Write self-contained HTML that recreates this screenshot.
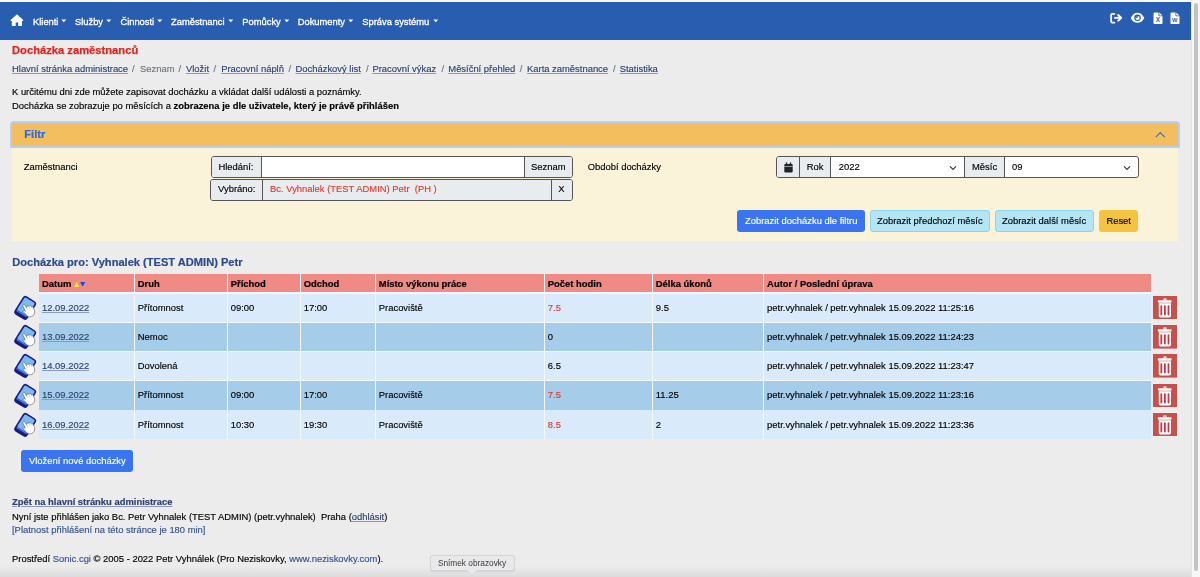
<!DOCTYPE html>
<html><head><meta charset="utf-8">
<style>
html,body{margin:0;padding:0}
body{width:1200px;height:577px;overflow:hidden;background:#ececec;position:relative;font-family:"Liberation Sans",sans-serif;color:#000}
.a{position:absolute}
.t{position:absolute;white-space:nowrap;font-size:9.41px;line-height:12px;-webkit-text-stroke:0.15px currentColor;filter:blur(0.25px)}
.b{font-weight:bold;-webkit-text-stroke:0.2px currentColor}
.lnk{color:#2f4273;text-decoration:underline;text-decoration-color:#8d99b8}
.nav{position:absolute;left:0;top:2px;width:1191px;height:37.5px;background:#285db0}
.nt{color:#fff;font-size:9.36px;-webkit-text-stroke:0.3px #fff}
.caret{position:absolute;width:0;height:0;border-left:2.8px solid transparent;border-right:2.8px solid transparent;border-top:3.2px solid #fff}
</style></head>
<body>
<div class="a" style="left:0;top:0;width:1191px;height:2px;background:#f8f9fd"></div>
<div class="nav"></div>
<!-- home -->
<svg class="a" style="left:10px;top:14px" width="14" height="13" viewBox="0 0 14 13"><path d="M7 0.2 L13.2 6 L13.2 6.9 L12 6.9 L12 11.9 L8.2 11.9 L8.2 8.4 L5.7 8.4 L5.7 11.9 L1.8 11.9 L1.8 6.9 L0.6 6.9 L0.6 6 Z" fill="#fff"/></svg>
<div class="t nt" style="left:33px;top:15.6px">Klienti</div><svg class="a" style="left:60.9px;top:19px" width="6" height="4" viewBox="0 0 6 4"><path d="M0.3 0.4 H5.3 L2.8 3.3 Z" fill="#fff"/></svg>
<div class="t nt" style="left:75px;top:15.6px">Služby</div><svg class="a" style="left:105.9px;top:19px" width="6" height="4" viewBox="0 0 6 4"><path d="M0.3 0.4 H5.3 L2.8 3.3 Z" fill="#fff"/></svg>
<div class="t nt" style="left:120.4px;top:15.6px">Činnosti</div><svg class="a" style="left:156.9px;top:19px" width="6" height="4" viewBox="0 0 6 4"><path d="M0.3 0.4 H5.3 L2.8 3.3 Z" fill="#fff"/></svg>
<div class="t nt" style="left:171px;top:15.6px">Zaměstnanci</div><svg class="a" style="left:227.7px;top:19px" width="6" height="4" viewBox="0 0 6 4"><path d="M0.3 0.4 H5.3 L2.8 3.3 Z" fill="#fff"/></svg>
<div class="t nt" style="left:242.3px;top:15.6px">Pomůcky</div><svg class="a" style="left:283.7px;top:19px" width="6" height="4" viewBox="0 0 6 4"><path d="M0.3 0.4 H5.3 L2.8 3.3 Z" fill="#fff"/></svg>
<div class="t nt" style="left:297.7px;top:15.6px">Dokumenty</div><svg class="a" style="left:347.7px;top:19px" width="6" height="4" viewBox="0 0 6 4"><path d="M0.3 0.4 H5.3 L2.8 3.3 Z" fill="#fff"/></svg>
<div class="t nt" style="left:362.3px;top:15.6px">Správa systému</div><svg class="a" style="left:432.7px;top:19px" width="6" height="4" viewBox="0 0 6 4"><path d="M0.3 0.4 H5.3 L2.8 3.3 Z" fill="#fff"/></svg>

<!-- title -->
<div class="t b" style="left:12px;top:43.4px;font-size:11.2px;line-height:14px;color:#e3241f;-webkit-text-stroke:0.25px #e3241f">Docházka zaměstnanců</div>
<!-- breadcrumb -->
<div class="t lnk" style="left:12px;top:62.8px">Hlavní stránka administrace</div>
<div class="t" style="left:132px;top:62.8px;color:#6c757d">/</div>
<div class="t" style="left:140px;top:62.8px;color:#6c757d">Seznam</div>
<div class="t" style="left:178.5px;top:62.8px;color:#6c757d">/</div>
<div class="t lnk" style="left:186px;top:62.8px">Vložit</div>
<div class="t" style="left:213.6px;top:62.8px;color:#6c757d">/</div>
<div class="t lnk" style="left:221.2px;top:62.8px">Pracovní náplň</div>
<div class="t" style="left:288.6px;top:62.8px;color:#6c757d">/</div>
<div class="t lnk" style="left:295.5px;top:62.8px">Docházkový list</div>
<div class="t" style="left:366px;top:62.8px;color:#6c757d">/</div>
<div class="t lnk" style="left:372.4px;top:62.8px">Pracovní výkaz</div>
<div class="t" style="left:441.5px;top:62.8px;color:#6c757d">/</div>
<div class="t lnk" style="left:448.3px;top:62.8px">Měsíční přehled</div>
<div class="t" style="left:519.7px;top:62.8px;color:#6c757d">/</div>
<div class="t lnk" style="left:527px;top:62.8px">Karta zaměstnance</div>
<div class="t" style="left:612.9px;top:62.8px;color:#6c757d">/</div>
<div class="t lnk" style="left:619.7px;top:62.8px">Statistika</div>

<div class="t" style="left:12px;top:86px">K určitému dni zde můžete zapisovat docházku a vkládat další události a poznámky.</div>
<div class="t" style="left:12px;top:100px">Docházka se zobrazuje po měsících a <b>zobrazena je dle uživatele, který je právě přihlášen</b></div>


<!-- FILTER -->
<div class="a" style="left:10.2px;top:121px;width:1169.5px;height:26.5px;background:#b9cdf2;border-radius:4px 4px 1px 1px"></div>
<div class="a" style="left:12px;top:123px;width:1166px;height:22.8px;background:#f3bf5e"></div>
<div class="a" style="left:12px;top:147.5px;width:1166px;height:93.8px;background:#fbf3d9"></div>
<div class="t b" style="left:24.3px;top:127.4px;font-size:11.1px;line-height:14px;color:#2f6ad9">Filtr</div>
<svg class="a" style="left:1155px;top:131px" width="11" height="7" viewBox="0 0 11 7"><path d="M0.8 6.2 L5.3 1.6 L9.8 6.2" fill="none" stroke="#4a6aa8" stroke-width="1.1"/></svg>
<div class="t" style="left:23.7px;top:160.8px">Zaměstnanci</div>

<!-- group 1 -->
<div class="a" style="left:211px;top:156px;width:362px;height:22px;box-sizing:border-box;border:1px solid #555;border-radius:3px;background:#fff;overflow:hidden">
  <div class="a" style="left:0;top:0;width:49px;height:20px;background:#e9ecef;border-right:1px solid #555"></div>
  <div class="a" style="left:312px;top:0;width:49px;height:20px;background:#e9ecef;border-left:1px solid #555"></div>
</div>
<div class="t" style="left:218.4px;top:160.8px">Hledání:</div>
<div class="t" style="left:531px;top:160.8px">Seznam</div>
<!-- group 2 -->
<div class="a" style="left:210px;top:179px;width:363px;height:22px;box-sizing:border-box;border:1px solid #555;border-radius:3px;background:#e9ecef;overflow:hidden">
  <div class="a" style="left:0;top:0;width:51px;height:20px;background:#e9ecef;border-right:1px solid #555"></div>
  <div class="a" style="left:340px;top:0;width:21px;height:20px;background:#e9ecef;border-left:1px solid #555"></div>
</div>
<div class="t" style="left:218.1px;top:182.9px">Vybráno:</div>
<div class="t" style="left:270px;top:182.9px;color:#e03a30">Bc. Vyhnalek (TEST ADMIN) Petr&nbsp; (PH )</div>
<div class="t" style="left:558.3px;top:182.9px">X</div>

<div class="t" style="left:587.7px;top:160.8px">Období docházky</div>
<!-- date group -->
<div class="a" style="left:776px;top:156px;width:363px;height:22px;box-sizing:border-box;border:1px solid #555;border-radius:3px;background:#fff;overflow:hidden">
  <div class="a" style="left:0;top:0;width:22px;height:20px;background:#e9ecef;border-right:1px solid #555"></div>
  <div class="a" style="left:23px;top:0;width:30px;height:20px;background:#e9ecef;border-right:1px solid #555"></div>
  <div class="a" style="left:187px;top:0;width:39px;height:20px;background:#e9ecef;border-left:1px solid #555;border-right:1px solid #555"></div>
</div>
<svg class="a" style="left:784px;top:161.5px" width="9" height="11" viewBox="0 0 9 11"><rect x="0.3" y="2" width="8.4" height="8.6" rx="1" fill="#212529"/><rect x="1.8" y="0.5" width="1.4" height="2.5" fill="#212529"/><rect x="5.8" y="0.5" width="1.4" height="2.5" fill="#212529"/><rect x="0.3" y="4.2" width="8.4" height="0.6" fill="#e9ecef"/></svg>
<div class="t" style="left:806.8px;top:161px">Rok</div>
<div class="t" style="left:838.8px;top:161px">2022</div>
<svg class="a" style="left:948.5px;top:164.5px" width="8" height="6" viewBox="0 0 8 6"><path d="M1 1.3 L4 4.3 L7 1.3" fill="none" stroke="#343a40" stroke-width="1.2"/></svg>
<div class="t" style="left:972px;top:161px">Měsíc</div>
<div class="t" style="left:1012px;top:161px">09</div>
<svg class="a" style="left:1122.5px;top:164.5px" width="8" height="6" viewBox="0 0 8 6"><path d="M1 1.3 L4 4.3 L7 1.3" fill="none" stroke="#343a40" stroke-width="1.2"/></svg>

<!-- buttons -->
<div class="a" style="left:737.3px;top:210px;width:127.5px;height:22px;background:#3a74ef;border-radius:3px"></div>
<div class="t" style="left:745px;top:215.2px;color:#fff">Zobrazit docházku dle filtru</div>
<div class="a" style="left:869.7px;top:210px;width:120px;height:22px;box-sizing:border-box;background:#b4e5f5;border:1px solid #8fd4ea;border-radius:3px"></div>
<div class="t" style="left:877px;top:215.2px">Zobrazit předchozí měsíc</div>
<div class="a" style="left:994.8px;top:210px;width:98.8px;height:22px;box-sizing:border-box;background:#b4e5f5;border:1px solid #8fd4ea;border-radius:3px"></div>
<div class="t" style="left:1002px;top:215.2px">Zobrazit další měsíc</div>
<div class="a" style="left:1098.6px;top:210px;width:39.7px;height:22px;background:#f5c342;border-radius:3px"></div>
<div class="t" style="left:1106.4px;top:215.2px">Reset</div>

<!-- TABLE -->
<div class="t b" style="left:12.2px;top:255.3px;font-size:11.1px;line-height:14px;color:#2e4a8c">Docházka pro: Vyhnalek (TEST ADMIN) Petr</div>
<div class="a" style="left:39.25px;top:273.7px;width:1111.75px;height:165.50px;background:#f4f7fb"></div>
<div class="a" style="left:39.25px;top:273.7px;width:94.75px;height:18.8px;background:#f08a84"></div>
<div class="t b" style="left:42.05px;top:278.20px">Datum</div>
<div class="a" style="left:135px;top:273.7px;width:92.00px;height:18.8px;background:#f08a84"></div>
<div class="t b" style="left:137.80px;top:278.20px">Druh</div>
<div class="a" style="left:228px;top:273.7px;width:72.00px;height:18.8px;background:#f08a84"></div>
<div class="t b" style="left:230.80px;top:278.20px">Příchod</div>
<div class="a" style="left:301px;top:273.7px;width:74.00px;height:18.8px;background:#f08a84"></div>
<div class="t b" style="left:303.80px;top:278.20px">Odchod</div>
<div class="a" style="left:376px;top:273.7px;width:168.00px;height:18.8px;background:#f08a84"></div>
<div class="t b" style="left:378.80px;top:278.20px">Místo výkonu práce</div>
<div class="a" style="left:545px;top:273.7px;width:107.00px;height:18.8px;background:#f08a84"></div>
<div class="t b" style="left:547.80px;top:278.20px">Počet hodin</div>
<div class="a" style="left:653px;top:273.7px;width:110.30px;height:18.8px;background:#f08a84"></div>
<div class="t b" style="left:655.80px;top:278.20px">Délka úkonů</div>
<div class="a" style="left:764.3px;top:273.7px;width:386.70px;height:18.8px;background:#f08a84"></div>
<div class="t b" style="left:767.10px;top:278.20px">Autor / Poslední úprava</div>
<svg class="a" style="left:73.6px;top:280.8px" width="12" height="7" viewBox="0 0 12 7"><path d="M0.2 6 L2.65 0.7 L5.1 6 Z" fill="#f7ee3a"/><path d="M6.1 1.0 L11.2 1.0 L8.65 5.8 Z" fill="#1d45ee"/></svg>
<div class="a" style="left:39.25px;top:293.60px;width:94.75px;height:28.4px;background:#d9ebfa"></div>
<div class="t lnk" style="left:42.05px;top:301.80px;">12.09.2022</div>
<div class="a" style="left:135px;top:293.60px;width:92.00px;height:28.4px;background:#d9ebfa"></div>
<div class="t" style="left:137.80px;top:301.80px;">Přítomnost</div>
<div class="a" style="left:228px;top:293.60px;width:72.00px;height:28.4px;background:#d9ebfa"></div>
<div class="t" style="left:230.80px;top:301.80px;">09:00</div>
<div class="a" style="left:301px;top:293.60px;width:74.00px;height:28.4px;background:#d9ebfa"></div>
<div class="t" style="left:303.80px;top:301.80px;">17:00</div>
<div class="a" style="left:376px;top:293.60px;width:168.00px;height:28.4px;background:#d9ebfa"></div>
<div class="t" style="left:378.80px;top:301.80px;">Pracoviště</div>
<div class="a" style="left:545px;top:293.60px;width:107.00px;height:28.4px;background:#d9ebfa"></div>
<div class="t" style="left:547.80px;top:301.80px;color:#e03a30;">7.5</div>
<div class="a" style="left:653px;top:293.60px;width:110.30px;height:28.4px;background:#d9ebfa"></div>
<div class="t" style="left:655.80px;top:301.80px;">9.5</div>
<div class="a" style="left:764.3px;top:293.60px;width:386.70px;height:28.4px;background:#d9ebfa"></div>
<div class="t" style="left:767.10px;top:301.80px;">petr.vyhnalek / petr.vyhnalek 15.09.2022 11:25:16</div>
<svg class="a" style="left:10px;top:292.00px" width="30" height="30" viewBox="0 0 30 30"><g transform="rotate(32 15.2 15.9)"><rect x="7.6" y="5.2" width="15.2" height="21.4" rx="3.2" fill="#1d1a7c"/><rect x="9.2" y="6.8" width="12" height="15.1" rx="1.4" fill="#7ab9ef"/><rect x="9.2" y="21.6" width="12" height="1.6" fill="#3b78de"/></g><path d="M13.3 12.6 C13.7 12.1 14.5 12.2 14.8 12.9 L16.5 15.6 C16.8 14.5 17.8 13.9 18.8 14.1 C19.5 13.6 20.8 13.7 21.4 14.3 C22.4 14.3 23.3 15.2 23.6 16.2 C24.4 17.2 24.9 19.2 24.6 21 C24.3 23 22.3 24.7 19.9 24.9 C18.3 25 17.2 24.3 16.3 23 L13.4 19.9 C13 19.4 13.2 18.7 13.9 18.7 C14.4 18.7 14.9 19 15.3 19.2 L12.9 13.9 C12.7 13.4 12.9 12.9 13.3 12.6 Z" fill="#fff" stroke="#4a4a4a" stroke-width="0.55"/><path d="M16.5 15.6 L17.6 17.6 M18.8 14.1 L19.8 16.6 M21.4 14.3 L22 16.6" stroke="#8a8a8a" stroke-width="0.45" fill="none"/></svg>
<div class="a" style="left:1152.5px;top:295.40px;width:24.8px;height:24.6px;background:#eef3f6"></div><svg class="a" style="left:1153px;top:295.90px" width="24" height="23.6" viewBox="0 0 24 23.6"><rect width="24" height="23.6" fill="#c8504c"/><rect x="10.3" y="2.2" width="3.4" height="2.4" rx="0.6" fill="#f0c8c6"/><rect x="4.7" y="4.3" width="14" height="2.4" rx="1.1" fill="#fff"/><path d="M5.8 7.2 H18 V19.8 C18 20.8 17.2 21.4 16.4 21.4 H7.4 C6.6 21.4 5.8 20.8 5.8 19.8 Z" fill="#fff"/><rect x="7.4" y="9.2" width="1.8" height="10.3" rx="0.9" fill="#c8364a"/><rect x="11" y="9.2" width="1.8" height="10.3" rx="0.9" fill="#c8364a"/><rect x="14.6" y="9.2" width="1.8" height="10.3" rx="0.9" fill="#c8364a"/></svg>
<div class="a" style="left:39.25px;top:322.80px;width:94.75px;height:28.4px;background:#a5cce8"></div>
<div class="t lnk" style="left:42.05px;top:331.00px;">13.09.2022</div>
<div class="a" style="left:135px;top:322.80px;width:92.00px;height:28.4px;background:#a5cce8"></div>
<div class="t" style="left:137.80px;top:331.00px;">Nemoc</div>
<div class="a" style="left:228px;top:322.80px;width:72.00px;height:28.4px;background:#a5cce8"></div>
<div class="a" style="left:301px;top:322.80px;width:74.00px;height:28.4px;background:#a5cce8"></div>
<div class="a" style="left:376px;top:322.80px;width:168.00px;height:28.4px;background:#a5cce8"></div>
<div class="a" style="left:545px;top:322.80px;width:107.00px;height:28.4px;background:#a5cce8"></div>
<div class="t" style="left:547.80px;top:331.00px;">0</div>
<div class="a" style="left:653px;top:322.80px;width:110.30px;height:28.4px;background:#a5cce8"></div>
<div class="a" style="left:764.3px;top:322.80px;width:386.70px;height:28.4px;background:#a5cce8"></div>
<div class="t" style="left:767.10px;top:331.00px;">petr.vyhnalek / petr.vyhnalek 15.09.2022 11:24:23</div>
<svg class="a" style="left:10px;top:321.20px" width="30" height="30" viewBox="0 0 30 30"><g transform="rotate(32 15.2 15.9)"><rect x="7.6" y="5.2" width="15.2" height="21.4" rx="3.2" fill="#1d1a7c"/><rect x="9.2" y="6.8" width="12" height="15.1" rx="1.4" fill="#7ab9ef"/><rect x="9.2" y="21.6" width="12" height="1.6" fill="#3b78de"/></g><path d="M13.3 12.6 C13.7 12.1 14.5 12.2 14.8 12.9 L16.5 15.6 C16.8 14.5 17.8 13.9 18.8 14.1 C19.5 13.6 20.8 13.7 21.4 14.3 C22.4 14.3 23.3 15.2 23.6 16.2 C24.4 17.2 24.9 19.2 24.6 21 C24.3 23 22.3 24.7 19.9 24.9 C18.3 25 17.2 24.3 16.3 23 L13.4 19.9 C13 19.4 13.2 18.7 13.9 18.7 C14.4 18.7 14.9 19 15.3 19.2 L12.9 13.9 C12.7 13.4 12.9 12.9 13.3 12.6 Z" fill="#fff" stroke="#4a4a4a" stroke-width="0.55"/><path d="M16.5 15.6 L17.6 17.6 M18.8 14.1 L19.8 16.6 M21.4 14.3 L22 16.6" stroke="#8a8a8a" stroke-width="0.45" fill="none"/></svg>
<div class="a" style="left:1152.5px;top:324.60px;width:24.8px;height:24.6px;background:#eef3f6"></div><svg class="a" style="left:1153px;top:325.10px" width="24" height="23.6" viewBox="0 0 24 23.6"><rect width="24" height="23.6" fill="#c8504c"/><rect x="10.3" y="2.2" width="3.4" height="2.4" rx="0.6" fill="#f0c8c6"/><rect x="4.7" y="4.3" width="14" height="2.4" rx="1.1" fill="#fff"/><path d="M5.8 7.2 H18 V19.8 C18 20.8 17.2 21.4 16.4 21.4 H7.4 C6.6 21.4 5.8 20.8 5.8 19.8 Z" fill="#fff"/><rect x="7.4" y="9.2" width="1.8" height="10.3" rx="0.9" fill="#c8364a"/><rect x="11" y="9.2" width="1.8" height="10.3" rx="0.9" fill="#c8364a"/><rect x="14.6" y="9.2" width="1.8" height="10.3" rx="0.9" fill="#c8364a"/></svg>
<div class="a" style="left:39.25px;top:352.00px;width:94.75px;height:28.4px;background:#d9ebfa"></div>
<div class="t lnk" style="left:42.05px;top:360.20px;">14.09.2022</div>
<div class="a" style="left:135px;top:352.00px;width:92.00px;height:28.4px;background:#d9ebfa"></div>
<div class="t" style="left:137.80px;top:360.20px;">Dovolená</div>
<div class="a" style="left:228px;top:352.00px;width:72.00px;height:28.4px;background:#d9ebfa"></div>
<div class="a" style="left:301px;top:352.00px;width:74.00px;height:28.4px;background:#d9ebfa"></div>
<div class="a" style="left:376px;top:352.00px;width:168.00px;height:28.4px;background:#d9ebfa"></div>
<div class="a" style="left:545px;top:352.00px;width:107.00px;height:28.4px;background:#d9ebfa"></div>
<div class="t" style="left:547.80px;top:360.20px;">6.5</div>
<div class="a" style="left:653px;top:352.00px;width:110.30px;height:28.4px;background:#d9ebfa"></div>
<div class="a" style="left:764.3px;top:352.00px;width:386.70px;height:28.4px;background:#d9ebfa"></div>
<div class="t" style="left:767.10px;top:360.20px;">petr.vyhnalek / petr.vyhnalek 15.09.2022 11:23:47</div>
<svg class="a" style="left:10px;top:350.40px" width="30" height="30" viewBox="0 0 30 30"><g transform="rotate(32 15.2 15.9)"><rect x="7.6" y="5.2" width="15.2" height="21.4" rx="3.2" fill="#1d1a7c"/><rect x="9.2" y="6.8" width="12" height="15.1" rx="1.4" fill="#7ab9ef"/><rect x="9.2" y="21.6" width="12" height="1.6" fill="#3b78de"/></g><path d="M13.3 12.6 C13.7 12.1 14.5 12.2 14.8 12.9 L16.5 15.6 C16.8 14.5 17.8 13.9 18.8 14.1 C19.5 13.6 20.8 13.7 21.4 14.3 C22.4 14.3 23.3 15.2 23.6 16.2 C24.4 17.2 24.9 19.2 24.6 21 C24.3 23 22.3 24.7 19.9 24.9 C18.3 25 17.2 24.3 16.3 23 L13.4 19.9 C13 19.4 13.2 18.7 13.9 18.7 C14.4 18.7 14.9 19 15.3 19.2 L12.9 13.9 C12.7 13.4 12.9 12.9 13.3 12.6 Z" fill="#fff" stroke="#4a4a4a" stroke-width="0.55"/><path d="M16.5 15.6 L17.6 17.6 M18.8 14.1 L19.8 16.6 M21.4 14.3 L22 16.6" stroke="#8a8a8a" stroke-width="0.45" fill="none"/></svg>
<div class="a" style="left:1152.5px;top:353.80px;width:24.8px;height:24.6px;background:#eef3f6"></div><svg class="a" style="left:1153px;top:354.30px" width="24" height="23.6" viewBox="0 0 24 23.6"><rect width="24" height="23.6" fill="#c8504c"/><rect x="10.3" y="2.2" width="3.4" height="2.4" rx="0.6" fill="#f0c8c6"/><rect x="4.7" y="4.3" width="14" height="2.4" rx="1.1" fill="#fff"/><path d="M5.8 7.2 H18 V19.8 C18 20.8 17.2 21.4 16.4 21.4 H7.4 C6.6 21.4 5.8 20.8 5.8 19.8 Z" fill="#fff"/><rect x="7.4" y="9.2" width="1.8" height="10.3" rx="0.9" fill="#c8364a"/><rect x="11" y="9.2" width="1.8" height="10.3" rx="0.9" fill="#c8364a"/><rect x="14.6" y="9.2" width="1.8" height="10.3" rx="0.9" fill="#c8364a"/></svg>
<div class="a" style="left:39.25px;top:381.20px;width:94.75px;height:28.4px;background:#a5cce8"></div>
<div class="t lnk" style="left:42.05px;top:389.40px;">15.09.2022</div>
<div class="a" style="left:135px;top:381.20px;width:92.00px;height:28.4px;background:#a5cce8"></div>
<div class="t" style="left:137.80px;top:389.40px;">Přítomnost</div>
<div class="a" style="left:228px;top:381.20px;width:72.00px;height:28.4px;background:#a5cce8"></div>
<div class="t" style="left:230.80px;top:389.40px;">09:00</div>
<div class="a" style="left:301px;top:381.20px;width:74.00px;height:28.4px;background:#a5cce8"></div>
<div class="t" style="left:303.80px;top:389.40px;">17:00</div>
<div class="a" style="left:376px;top:381.20px;width:168.00px;height:28.4px;background:#a5cce8"></div>
<div class="t" style="left:378.80px;top:389.40px;">Pracoviště</div>
<div class="a" style="left:545px;top:381.20px;width:107.00px;height:28.4px;background:#a5cce8"></div>
<div class="t" style="left:547.80px;top:389.40px;color:#e03a30;">7.5</div>
<div class="a" style="left:653px;top:381.20px;width:110.30px;height:28.4px;background:#a5cce8"></div>
<div class="t" style="left:655.80px;top:389.40px;">11.25</div>
<div class="a" style="left:764.3px;top:381.20px;width:386.70px;height:28.4px;background:#a5cce8"></div>
<div class="t" style="left:767.10px;top:389.40px;">petr.vyhnalek / petr.vyhnalek 15.09.2022 11:23:16</div>
<svg class="a" style="left:10px;top:379.60px" width="30" height="30" viewBox="0 0 30 30"><g transform="rotate(32 15.2 15.9)"><rect x="7.6" y="5.2" width="15.2" height="21.4" rx="3.2" fill="#1d1a7c"/><rect x="9.2" y="6.8" width="12" height="15.1" rx="1.4" fill="#7ab9ef"/><rect x="9.2" y="21.6" width="12" height="1.6" fill="#3b78de"/></g><path d="M13.3 12.6 C13.7 12.1 14.5 12.2 14.8 12.9 L16.5 15.6 C16.8 14.5 17.8 13.9 18.8 14.1 C19.5 13.6 20.8 13.7 21.4 14.3 C22.4 14.3 23.3 15.2 23.6 16.2 C24.4 17.2 24.9 19.2 24.6 21 C24.3 23 22.3 24.7 19.9 24.9 C18.3 25 17.2 24.3 16.3 23 L13.4 19.9 C13 19.4 13.2 18.7 13.9 18.7 C14.4 18.7 14.9 19 15.3 19.2 L12.9 13.9 C12.7 13.4 12.9 12.9 13.3 12.6 Z" fill="#fff" stroke="#4a4a4a" stroke-width="0.55"/><path d="M16.5 15.6 L17.6 17.6 M18.8 14.1 L19.8 16.6 M21.4 14.3 L22 16.6" stroke="#8a8a8a" stroke-width="0.45" fill="none"/></svg>
<div class="a" style="left:1152.5px;top:383.00px;width:24.8px;height:24.6px;background:#eef3f6"></div><svg class="a" style="left:1153px;top:383.50px" width="24" height="23.6" viewBox="0 0 24 23.6"><rect width="24" height="23.6" fill="#c8504c"/><rect x="10.3" y="2.2" width="3.4" height="2.4" rx="0.6" fill="#f0c8c6"/><rect x="4.7" y="4.3" width="14" height="2.4" rx="1.1" fill="#fff"/><path d="M5.8 7.2 H18 V19.8 C18 20.8 17.2 21.4 16.4 21.4 H7.4 C6.6 21.4 5.8 20.8 5.8 19.8 Z" fill="#fff"/><rect x="7.4" y="9.2" width="1.8" height="10.3" rx="0.9" fill="#c8364a"/><rect x="11" y="9.2" width="1.8" height="10.3" rx="0.9" fill="#c8364a"/><rect x="14.6" y="9.2" width="1.8" height="10.3" rx="0.9" fill="#c8364a"/></svg>
<div class="a" style="left:39.25px;top:410.40px;width:94.75px;height:28.4px;background:#d9ebfa"></div>
<div class="t lnk" style="left:42.05px;top:418.60px;">16.09.2022</div>
<div class="a" style="left:135px;top:410.40px;width:92.00px;height:28.4px;background:#d9ebfa"></div>
<div class="t" style="left:137.80px;top:418.60px;">Přítomnost</div>
<div class="a" style="left:228px;top:410.40px;width:72.00px;height:28.4px;background:#d9ebfa"></div>
<div class="t" style="left:230.80px;top:418.60px;">10:30</div>
<div class="a" style="left:301px;top:410.40px;width:74.00px;height:28.4px;background:#d9ebfa"></div>
<div class="t" style="left:303.80px;top:418.60px;">19:30</div>
<div class="a" style="left:376px;top:410.40px;width:168.00px;height:28.4px;background:#d9ebfa"></div>
<div class="t" style="left:378.80px;top:418.60px;">Pracoviště</div>
<div class="a" style="left:545px;top:410.40px;width:107.00px;height:28.4px;background:#d9ebfa"></div>
<div class="t" style="left:547.80px;top:418.60px;color:#e03a30;">8.5</div>
<div class="a" style="left:653px;top:410.40px;width:110.30px;height:28.4px;background:#d9ebfa"></div>
<div class="t" style="left:655.80px;top:418.60px;">2</div>
<div class="a" style="left:764.3px;top:410.40px;width:386.70px;height:28.4px;background:#d9ebfa"></div>
<div class="t" style="left:767.10px;top:418.60px;">petr.vyhnalek / petr.vyhnalek 15.09.2022 11:23:36</div>
<svg class="a" style="left:10px;top:408.80px" width="30" height="30" viewBox="0 0 30 30"><g transform="rotate(32 15.2 15.9)"><rect x="7.6" y="5.2" width="15.2" height="21.4" rx="3.2" fill="#1d1a7c"/><rect x="9.2" y="6.8" width="12" height="15.1" rx="1.4" fill="#7ab9ef"/><rect x="9.2" y="21.6" width="12" height="1.6" fill="#3b78de"/></g><path d="M13.3 12.6 C13.7 12.1 14.5 12.2 14.8 12.9 L16.5 15.6 C16.8 14.5 17.8 13.9 18.8 14.1 C19.5 13.6 20.8 13.7 21.4 14.3 C22.4 14.3 23.3 15.2 23.6 16.2 C24.4 17.2 24.9 19.2 24.6 21 C24.3 23 22.3 24.7 19.9 24.9 C18.3 25 17.2 24.3 16.3 23 L13.4 19.9 C13 19.4 13.2 18.7 13.9 18.7 C14.4 18.7 14.9 19 15.3 19.2 L12.9 13.9 C12.7 13.4 12.9 12.9 13.3 12.6 Z" fill="#fff" stroke="#4a4a4a" stroke-width="0.55"/><path d="M16.5 15.6 L17.6 17.6 M18.8 14.1 L19.8 16.6 M21.4 14.3 L22 16.6" stroke="#8a8a8a" stroke-width="0.45" fill="none"/></svg>
<div class="a" style="left:1152.5px;top:412.20px;width:24.8px;height:24.6px;background:#eef3f6"></div><svg class="a" style="left:1153px;top:412.70px" width="24" height="23.6" viewBox="0 0 24 23.6"><rect width="24" height="23.6" fill="#c8504c"/><rect x="10.3" y="2.2" width="3.4" height="2.4" rx="0.6" fill="#f0c8c6"/><rect x="4.7" y="4.3" width="14" height="2.4" rx="1.1" fill="#fff"/><path d="M5.8 7.2 H18 V19.8 C18 20.8 17.2 21.4 16.4 21.4 H7.4 C6.6 21.4 5.8 20.8 5.8 19.8 Z" fill="#fff"/><rect x="7.4" y="9.2" width="1.8" height="10.3" rx="0.9" fill="#c8364a"/><rect x="11" y="9.2" width="1.8" height="10.3" rx="0.9" fill="#c8364a"/><rect x="14.6" y="9.2" width="1.8" height="10.3" rx="0.9" fill="#c8364a"/></svg>

<div class="a" style="left:21.1px;top:449.5px;width:111.7px;height:22.2px;background:#3a74ef;border-radius:3px"></div>
<div class="t" style="left:29px;top:455px;color:#fff">Vložení nové docházky</div>
<div class="t b lnk" style="left:12px;top:495.8px">Zpět na hlavní stránku administrace</div>
<div class="t" style="left:12px;top:510.5px">Nyní jste přihlášen jako Bc. Petr Vyhnalek (TEST ADMIN) (petr.vyhnalek)&nbsp; Praha (<span class="lnk">odhlásit</span>)</div>
<div class="t" style="left:12px;top:524.4px;color:#35528f">[Platnost přihlášení na této stránce je 180 min]</div>
<div class="t" style="left:12px;top:552.7px">Prostředí <span style="color:#35528f">Sonic.cgi</span> © 2005 - 2022 Petr Vyhnálek (Pro Neziskovky, <span style="color:#35528f">www.neziskovky.com</span>).</div>


<!-- nav right icons -->
<svg class="a" style="left:1109px;top:12px" width="15" height="12" viewBox="0 0 15 12"><path d="M5.4 1.85 H3.3 C2.5 1.85 2.15 2.3 2.15 3.1 V9.4 C2.15 10.2 2.5 10.65 3.3 10.65 H5.4" fill="none" stroke="#fff" stroke-width="1.8" stroke-linecap="round"/><path d="M5.2 5.85 H11.4" stroke="#fff" stroke-width="1.9"/><path d="M9.2 3 L12.3 5.85 L9.2 8.7" fill="none" stroke="#fff" stroke-width="1.9" stroke-linecap="round" stroke-linejoin="round"/></svg>
<svg class="a" style="left:1130px;top:12px" width="15" height="12" viewBox="0 0 15 12"><path d="M0.7 5.9 C2.4 2.4 4.8 0.7 7.5 0.7 C10.2 0.7 12.6 2.4 14.3 5.9 C12.6 9.3 10.2 10.8 7.5 10.8 C4.8 10.8 2.4 9.3 0.7 5.9 Z" fill="#fff"/><circle cx="7.5" cy="5.8" r="3.3" fill="#2a5db0"/><circle cx="7.6" cy="6" r="2.1" fill="#fff"/><path d="M7.6 3.4 C6.5 3.6 5.7 4.4 5.5 5.4 L7.6 6 Z" fill="#2a5db0"/></svg>
<svg class="a" style="left:1152.5px;top:11.5px" width="10" height="12.5" viewBox="0 0 10 12.5"><path d="M1.4 0.5 H5.5 V3.5 C5.5 4 5.8 4.3 6.3 4.3 H9.5 V10.9 C9.5 11.5 9.1 11.9 8.5 11.9 H1.4 C0.9 11.9 0.5 11.5 0.5 10.9 V1.4 C0.5 0.9 0.9 0.5 1.4 0.5 Z" fill="#fff"/><path d="M6.3 0.6 L9.4 3.6 H6.3 Z" fill="#fff"/><text x="4.9" y="10.2" text-anchor="middle" font-family="Liberation Sans" font-weight="bold" font-size="6.4" fill="#2a5db0">X</text></svg>
<svg class="a" style="left:1170.4px;top:11.5px" width="10" height="12.5" viewBox="0 0 10 12.5"><path d="M1.4 0.5 H5.5 V3.5 C5.5 4 5.8 4.3 6.3 4.3 H9.5 V10.9 C9.5 11.5 9.1 11.9 8.5 11.9 H1.4 C0.9 11.9 0.5 11.5 0.5 10.9 V1.4 C0.5 0.9 0.9 0.5 1.4 0.5 Z" fill="#fff"/><path d="M6.3 0.6 L9.4 3.6 H6.3 Z" fill="#fff"/><text x="4.8" y="10.2" text-anchor="middle" font-family="Liberation Sans" font-weight="bold" font-size="6.2" fill="#2a5db0" textLength="5.4" lengthAdjust="spacingAndGlyphs">W</text></svg>
<!-- scrollbar -->
<div class="a" style="left:1191px;top:0;width:9px;height:577px;background:#f7f7f7;border-left:0.5px solid #e4e4e4;box-sizing:border-box"></div>
<div class="a" style="left:1193.7px;top:3px;width:4.4px;height:567.5px;background:#c3c3c3;border-radius:2.2px"></div>
<!-- bottom shade -->
<div class="a" style="left:0;top:566px;width:1191px;height:11px;background:linear-gradient(to bottom, rgba(0,0,0,0), rgba(0,0,0,0.07))"></div>
<!-- tooltip -->
<div class="a" style="left:429.6px;top:554.6px;width:85px;height:16.1px;box-sizing:border-box;background:#e9e9eb;border:1px solid #d6d6d6;border-radius:3px;box-shadow:0 0.5px 1px rgba(0,0,0,0.08)"></div>
<svg class="a" style="left:467px;top:569.7px" width="10" height="6" viewBox="0 0 10 6"><path d="M0.5 0 L5 5.5 L9.5 0 Z" fill="#e9e9eb"/><path d="M0.5 1 L5 5.5 L9.5 1" fill="none" stroke="#d6d6d6" stroke-width="0.8"/><rect x="0" y="0" width="10" height="1" fill="#e9e9eb"/></svg>
<div class="t" style="left:437.9px;top:557.6px;font-size:8.3px;line-height:10px;color:#3a3a3a;-webkit-text-stroke:0">Snímek obrazovky</div>

</body></html>
